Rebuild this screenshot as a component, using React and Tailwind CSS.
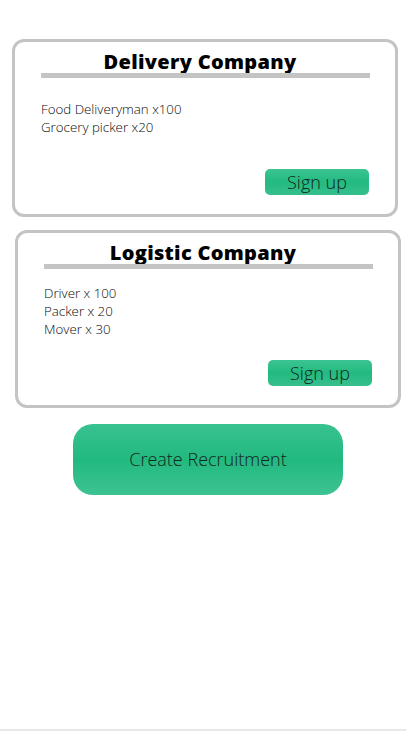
import React from 'react';

const companies = [
    {
        name: 'Delivery Company',
        jobs: ['Food Deliveryman x100', 'Grocery picker x20'],
        offset: 'ml-[12px]',
        gap: 'mt-[22px]',
    },
    {
        name: 'Logistic Company',
        jobs: ['Driver x 100', 'Packer x 20', 'Mover x 30'],
        offset: 'ml-[15px]',
        gap: 'mt-[15px]',
    },
];

function CompanyCard({ company }) {
    return (
        <div className={`${company.offset} w-[386px] h-[178px] border-[3px] border-[#c4c4c4] rounded-[12px] bg-white flex flex-col`}>
            <h2 className="pt-[9px] pr-[10px] text-center text-[20px] leading-[22px] font-extrabold tracking-[0.3px] text-black">
                {company.name}
            </h2>
            <div className="ml-[26px] mr-[25px] h-[5px] bg-[#c4c4c4]"></div>
            <div className={`${company.gap} ml-[26px] text-[13.3px] leading-[18px] font-light text-[#0a0a0a]`}>
                {company.jobs.map(job => (
                    <div key={job}>{job}</div>
                ))}
            </div>
            <div className="mt-auto mb-[19px] mr-[26px] flex justify-end">
                <button className="w-[104px] h-[26px] rounded-[5px] bg-gradient-to-b from-[#3bc493] via-[#22ba80] to-[#36bf8d] text-[18px] leading-[26px] font-light text-[#10261b]">
                    Sign up
                </button>
            </div>
        </div>
    );
}

export default function App() {
    return (
        <div className="h-[731px] bg-white border-b-2 border-[#e8e8e8] pt-[39px] flex flex-col" style={{ fontFamily: '"Open Sans", "Liberation Sans", sans-serif' }}>
            <div className="flex flex-col gap-[13px]">
                {companies.map(c => (
                    <CompanyCard key={c.name} company={c} />
                ))}
            </div>
            <button className="mt-[16px] ml-[73px] w-[270px] h-[71px] rounded-[20px] bg-gradient-to-b from-[#38c291] via-[#21b97f] to-[#3cc393] text-[18px] font-light text-[#13271d]">
                Create Recruitment
            </button>
        </div>
    );
}
